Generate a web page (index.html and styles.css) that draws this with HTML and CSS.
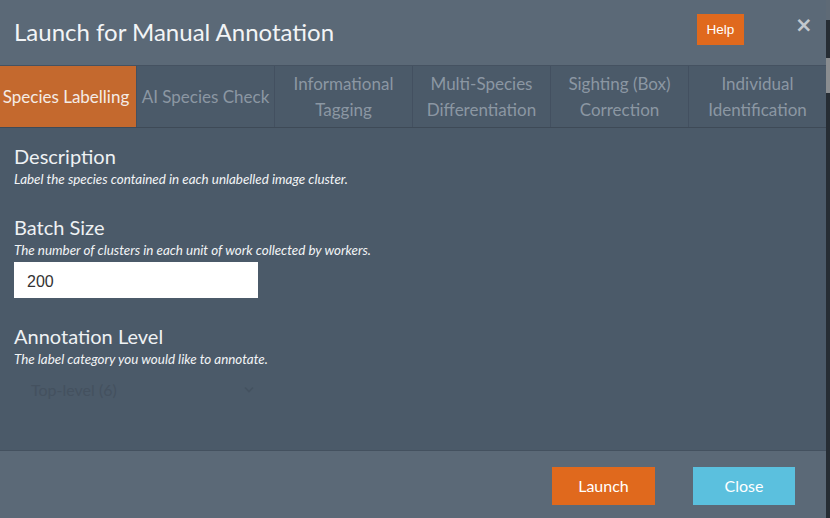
FILE: index.html
```html
<!DOCTYPE html>
<html>
<head>
<meta charset="utf-8">
<link rel="stylesheet" href="styles.css">
</head>
<body>
<div class="page">
  <div class="modal">
    <div class="modal-header">
      <h1 class="title">Launch for Manual Annotation</h1>
      <button class="help">Help</button>
      <span class="close-x">×</span>
    </div>
    <div class="tabs">
      <div class="tab active">Species Labelling</div>
      <div class="tab">AI Species Check</div>
      <div class="tab">Informational<br>Tagging</div>
      <div class="tab">Multi-Species<br>Differentiation</div>
      <div class="tab">Sighting (Box)<br>Correction</div>
      <div class="tab">Individual<br>Identification</div>
    </div>
    <div class="modal-body">
      <div class="field">
        <h2 class="label">Description</h2>
        <p class="hint">Label the species contained in each unlabelled image cluster.</p>
      </div>
      <div class="field">
        <h2 class="label">Batch Size</h2>
        <p class="hint">The number of clusters in each unit of work collected by workers.</p>
        <input class="text-input" type="text" value="200">
      </div>
      <div class="field">
        <h2 class="label">Annotation Level</h2>
        <p class="hint">The label category you would like to annotate.</p>
        <div class="select">
          <span>Top-level (6)</span>
          <svg class="chev" width="10" height="7" viewBox="0 0 10 7"><path d="M1 1.5 L5 5.5 L9 1.5" fill="none" stroke="#445260" stroke-width="1.6"/></svg>
        </div>
      </div>
    </div>
    <div class="modal-footer">
      <button class="btn launch">Launch</button>
      <button class="btn close">Close</button>
    </div>
  </div>
  <div class="edge">
    <div class="edge-top"></div>
    <div class="edge-chip"></div>
  </div>
</div>
</body>
</html>
```

FILE: styles.css
```css
* { box-sizing: border-box; }
html, body { margin: 0; padding: 0; }
body {
  width: 830px;
  height: 518px;
  overflow: hidden;
  background: #262d34;
  font-family: Lato, "Open Sans", sans-serif;
}
.page {
  display: flex;
  height: 518px;
}
.modal {
  width: 826px;
  height: 518px;
  display: flex;
  flex-direction: column;
  background: #4b5a69;
}
.modal-header {
  position: relative;
  height: 66px;
  background: #5b6977;
  display: flex;
  align-items: center;
  padding: 0 14px;
  border-bottom: 1px solid #455261;
}
.title {
  margin: 0;
  flex: 1;
  font-weight: 400;
  font-size: 24px;
  color: #f2f4f6;
  padding-bottom: 2px;
}
.help {
  background: #e0691d;
  color: #fff;
  border: none;
  font-family: "Liberation Sans", Arial, sans-serif;
  font-size: 13.5px;
  width: 47px;
  height: 31px;
  padding: 0;
  margin-right: 68px;
  margin-top: -7px;
}
.close-x {
  position: absolute;
  left: 795px;
  top: 13px;
  font-family: "DejaVu Sans", sans-serif;
  font-weight: bold;
  font-size: 21px;
  color: #c2c8ce;
}
.tabs {
  display: grid;
  grid-template-columns: 136px 138px 138px 138px 138px 138px;
  height: 62px;
  border-bottom: 1px solid #3e4a57;
  background: #4b5a69;
}
.tab {
  display: flex;
  align-items: center;
  justify-content: center;
  text-align: center;
  font-size: 17px;
  line-height: 26px;
  color: #8b97a3;
  border-left: 1px solid #435060;
  white-space: nowrap;
}
.tab:first-child { border-left: none; }
.tab.active {
  background: #c4692e;
  color: #f4ece6;
  padding-right: 4px;
}
.modal-body {
  flex: 1;
  padding: 15px 14px 0;
  display: flex;
  flex-direction: column;
  gap: 25px;
}
.field { display: flex; flex-direction: column; }
.label {
  margin: 0;
  font-weight: 400;
  font-size: 20px;
  line-height: 26px;
  color: #eef1f3;
}
.hint {
  margin: 0;
  font-style: italic;
  font-size: 13.4px;
  line-height: 20px;
  color: #f2f4f6;
}
.text-input {
  margin-top: 2px;
  width: 244px;
  height: 36px;
  border: none;
  padding: 4px 13px 0;
  font-family: "Liberation Sans", Arial, sans-serif;
  font-size: 16px;
  color: #333;
  background: #fff;
  outline: none;
}
.select {
  margin-top: 5px;
  width: 244px;
  height: 30px;
  display: flex;
  align-items: center;
  justify-content: space-between;
  padding: 0 4px 0 17px;
  font-size: 16px;
  color: #44515f;
}
.modal-footer {
  height: 68px;
  background: #5b6977;
  border-top: 1px solid #44515f;
  display: flex;
  align-items: center;
  justify-content: flex-end;
  padding: 2px 31px 0 0;
  gap: 38px;
}
.btn {
  border: none;
  width: 103px;
  height: 38px;
  font-family: Lato, sans-serif;
  font-size: 16px;
  color: #fff;
  padding: 0;
}
.launch { background: #e0691d; }
.close { background: #5bc0de; width: 102px; }
.edge {
  flex: 1;
  display: flex;
  flex-direction: column;
  background: #262d34;
}
.edge-top { height: 20px; background: #5e6a76; }
.edge-chip { margin-top: 38px; height: 35px; background: #8a8d90; }
```
